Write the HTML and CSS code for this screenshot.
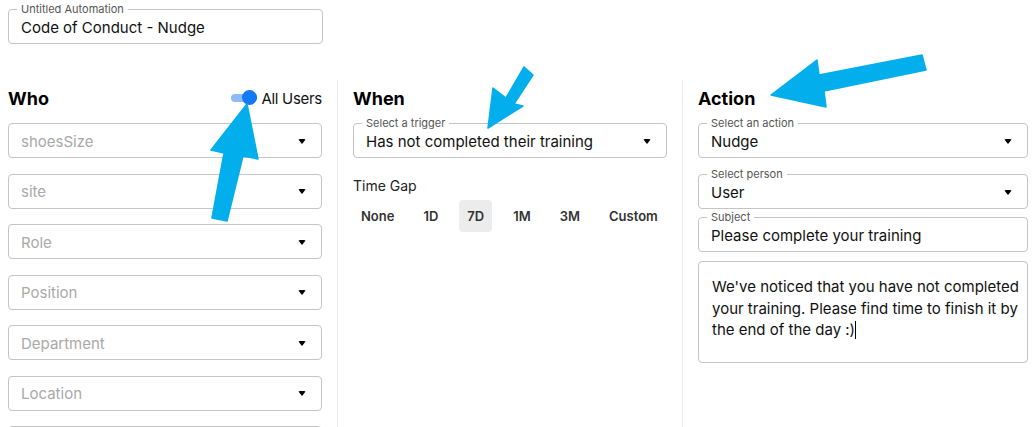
FILE: index.html
```html
<!DOCTYPE html>
<html lang="en">
<head>
    <meta charset="UTF-8">
    <meta name="viewport" content="width=device-width, initial-scale=1.0">
    <title>Automation Editor</title>
    <link rel="stylesheet" href="styles.css">
</head>
<body>
    <div class="page">
        <!-- Automation name -->
        <div class="field name-field">
            <span class="field-label">Untitled Automation</span>
            <span class="field-value">Code of Conduct - Nudge</span>
        </div>

        <div class="columns">
            <!-- Who -->
            <div class="column who">
                <div class="column-head">
                    <h2>Who</h2>
                    <div class="switch-row">
                        <span class="switch"><span class="switch-thumb"></span></span>
                        <span class="switch-text">All Users</span>
                    </div>
                </div>
                <div class="stack">
                    <div class="field select"><span class="placeholder">shoesSize</span><span class="caret"></span></div>
                    <div class="field select"><span class="placeholder">site</span><span class="caret"></span></div>
                    <div class="field select"><span class="placeholder">Role</span><span class="caret"></span></div>
                    <div class="field select"><span class="placeholder">Position</span><span class="caret"></span></div>
                    <div class="field select"><span class="placeholder">Department</span><span class="caret"></span></div>
                    <div class="field select"><span class="placeholder">Location</span><span class="caret"></span></div>
                    <div class="field select"></div>
                </div>
            </div>

            <!-- When -->
            <div class="column when">
                <div class="column-head">
                    <h2>When</h2>
                </div>
                <div class="field select">
                    <span class="field-label">Select a trigger</span>
                    <span class="field-value">Has not completed their training</span>
                    <span class="caret"></span>
                </div>
                <div class="time-gap">Time Gap</div>
                <div class="gap-buttons">
                    <button class="gap-button">None</button>
                    <button class="gap-button">1D</button>
                    <button class="gap-button active">7D</button>
                    <button class="gap-button">1M</button>
                    <button class="gap-button">3M</button>
                    <button class="gap-button">Custom</button>
                </div>
            </div>

            <!-- Action -->
            <div class="column action">
                <div class="column-head">
                    <h2>Action</h2>
                </div>
                <div class="field select">
                    <span class="field-label">Select an action</span>
                    <span class="field-value">Nudge</span>
                    <span class="caret"></span>
                </div>
                <div class="field select person">
                    <span class="field-label">Select person</span>
                    <span class="field-value">User</span>
                    <span class="caret"></span>
                </div>
                <div class="field subject">
                    <span class="field-label">Subject</span>
                    <span class="field-value">Please complete your training</span>
                </div>
                <div class="message">We've noticed that you have not completed<br>your training. Please find time to finish it by<br>the end of the day :)<span class="cursor"></span></div>
            </div>
        </div>

        <!-- Annotation arrows -->
        <svg class="arrows" width="1032" height="427" viewBox="0 0 1032 427">
            <polygon points="247,104 258,159 243,156 227,221 212,218 224,153 211,150" />
            <polygon points="488,128 493,88 506,98 524,67 533,75 514,104 523,106" />
            <polygon points="771,95 817,60 819,75 922,55 926,70 824,91 826,107" />
        </svg>
    </div>
</body>
</html>
```

FILE: styles.css
```css
body {
    margin: 0;
    font-family: Inter, "Noto Sans", sans-serif;
    color: #111;
    background: #fff;
}

.page {
    position: relative;
    width: 1032px;
    height: 427px;
    padding: 9px 0 0 8px;
    box-sizing: border-box;
    overflow: hidden;
}

.field {
    position: relative;
    box-sizing: border-box;
    height: 35px;
    border: 1px solid #c4c4c4;
    border-radius: 4px;
    display: flex;
    align-items: center;
    padding: 1px 12px 0;
    font-size: 15px;
}

.field-label {
    position: absolute;
    top: -7px;
    left: 8px;
    padding: 0 4px;
    background: #fff;
    font-size: 11px;
    line-height: 12px;
    color: #555;
}

.name-field {
    width: 315px;
}

.columns {
    display: grid;
    grid-template-columns: 330px 345px 345px;
    margin-top: 36px;
    height: 400px;
}

.column {
    padding-top: 7px;
    box-sizing: border-box;
}

.who {
    padding-right: 15px;
    border-right: 1px solid #eaeaea;
}

.when {
    padding: 7px 15px 0 15px;
    border-right: 1px solid #eaeaea;
}

.action {
    padding: 7px 0 0 15px;
}

.column-head {
    height: 22px;
    display: flex;
    align-items: center;
    justify-content: space-between;
    margin-bottom: 14px;
}

h2 {
    margin: 0;
    font-size: 18px;
    font-weight: 700;
    color: #000;
}

.switch-row {
    display: flex;
    align-items: center;
    gap: 4px;
    font-size: 15px;
    color: #111;
}

.switch-text {
    letter-spacing: -0.3px;
}

.switch {
    position: relative;
    width: 26px;
    height: 8px;
    border-radius: 4px;
    background: #8ebaf6;
}

.switch-thumb {
    position: absolute;
    right: 0;
    top: -4px;
    width: 15px;
    height: 15px;
    border-radius: 50%;
    background: #1479f4;
}

.stack {
    display: flex;
    flex-direction: column;
    gap: 15.5px;
}

.select {
    justify-content: space-between;
    padding-right: 15px;
}

.placeholder {
    color: #a9a9a9;
}

.caret {
    width: 0;
    height: 0;
    border-left: 4px solid transparent;
    border-right: 4px solid transparent;
    border-top: 5px solid #000;
    border-radius: 2px;
}

.time-gap {
    margin-top: 19px;
    font-size: 14px;
    line-height: 17px;
    color: #222;
}

.gap-buttons {
    display: flex;
    gap: 13px;
    margin-top: 6px;
}

.gap-button {
    height: 32px;
    padding: 0 8px;
    border: none;
    border-radius: 4px;
    background: none;
    font-family: Inter, "Noto Sans", sans-serif;
    font-size: 13px;
    font-weight: 600;
    color: #333;
}

.gap-button.active {
    background: #ececec;
}

.person {
    margin-top: 16px;
}

.subject {
    margin-top: 8px;
}

.message {
    margin-top: 9px;
    height: 102px;
    box-sizing: border-box;
    border: 1px solid #c4c4c4;
    border-radius: 4px;
    padding: 14px 12px 0 13px;
    font-size: 15px;
    line-height: 21.5px;
    white-space: nowrap;
}

.cursor {
    display: inline-block;
    width: 0;
    height: 18px;
    border-left: 1px solid #000;
    vertical-align: -4px;
}

.arrows {
    position: absolute;
    left: 0;
    top: 0;
    pointer-events: none;
}

.arrows polygon {
    fill: #02aeeb;
    stroke: #02aeeb;
    stroke-width: 1.5;
    stroke-linejoin: round;
}
```
